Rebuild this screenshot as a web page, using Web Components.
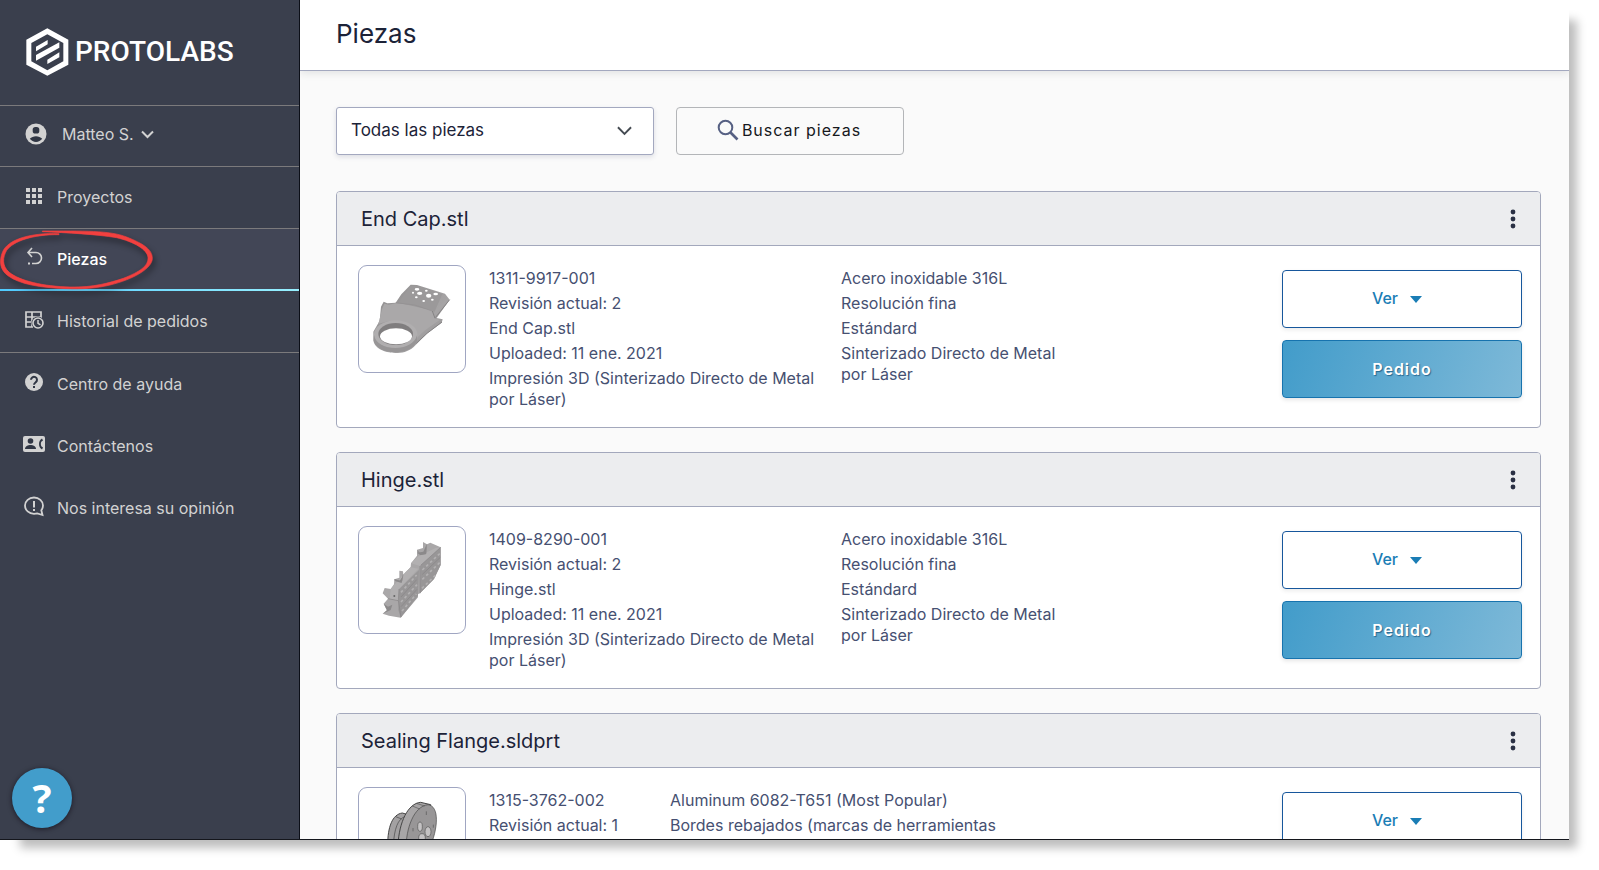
<!DOCTYPE html>
<html lang="es">
<head>
<meta charset="utf-8">
<title>Piezas - Protolabs</title>
<style>
  html, body { margin: 0; height: 100%; background: #fff; overflow: hidden; }
  body { font-family: Inter, "Liberation Sans", sans-serif; font-size: 16px; color: #1c2338; }
</style>
</head>
<body>
<pl-app>
  <pl-sidebar slot="sidebar">
    <pl-user name="Matteo S."></pl-user>
    <pl-nav-item icon="grid" line>Proyectos</pl-nav-item>
    <pl-nav-item icon="back" active>Piezas</pl-nav-item>
    <pl-nav-item icon="history" line>Historial de pedidos</pl-nav-item>
    <pl-nav-item icon="help">Centro de ayuda</pl-nav-item>
    <pl-nav-item icon="contact">Contáctenos</pl-nav-item>
    <pl-nav-item icon="opinion">Nos interesa su opinión</pl-nav-item>
  </pl-sidebar>
  <pl-header>Piezas</pl-header>
  <pl-toolbar></pl-toolbar>
  <part-card name="End Cap.stl" picture="endcap" orderable>
    <div slot="info">1311-9917-001</div>
    <div slot="info">Revisión actual: 2</div>
    <div slot="info">End Cap.stl</div>
    <div slot="info">Uploaded: 11 ene. 2021</div>
    <div slot="info">Impresión 3D (Sinterizado Directo de Metal por Láser)</div>
    <div slot="specs">Acero inoxidable 316L</div>
    <div slot="specs">Resolución fina</div>
    <div slot="specs">Estándard</div>
    <div slot="specs">Sinterizado Directo de Metal por Láser</div>
  </part-card>
  <part-card name="Hinge.stl" picture="hinge" orderable>
    <div slot="info">1409-8290-001</div>
    <div slot="info">Revisión actual: 2</div>
    <div slot="info">Hinge.stl</div>
    <div slot="info">Uploaded: 11 ene. 2021</div>
    <div slot="info">Impresión 3D (Sinterizado Directo de Metal por Láser)</div>
    <div slot="specs">Acero inoxidable 316L</div>
    <div slot="specs">Resolución fina</div>
    <div slot="specs">Estándard</div>
    <div slot="specs">Sinterizado Directo de Metal por Láser</div>
  </part-card>
  <part-card name="Sealing Flange.sldprt" picture="flange" wide-specs>
    <div slot="info">1315-3762-002</div>
    <div slot="info">Revisión actual: 1</div>
    <div slot="specs">Aluminum 6082-T651 (Most Popular)</div>
    <div slot="specs">Bordes rebajados (marcas de herramientas</div>
  </part-card>
</pl-app>

<script>
const ICONS = {
  grid: `<path fill="currentColor" d="M4 4h4v4H4zM10 4h4v4h-4zM16 4h4v4h-4zM4 10h4v4H4zM10 10h4v4h-4zM16 10h4v4h-4zM4 16h4v4H4zM10 16h4v4h-4zM16 16h4v4h-4z"/>`,
  back: `<path fill="none" stroke="currentColor" stroke-width="1.6" d="M10 3 6 7.500l4 4.500M6 7.500h8a5.500 5.500 0 0 1 0 11h-4"/><path fill="currentColor" d="M6 17.500h2v2H6z"/>`,
  history: `<path fill="none" stroke="currentColor" stroke-width="1.700" d="M11 19H4V4h15v6M4 9h15M4 14h7M10 4v15"/><circle cx="16" cy="15" r="6.500" fill="#3a3f4d"/><circle cx="16" cy="15" r="5" fill="none" stroke="currentColor" stroke-width="1.600"/><path fill="none" stroke="currentColor" stroke-width="1.500" d="M16 12v3.300l2.500 1.500"/>`,
  help: `<circle cx="12" cy="12" r="9" fill="currentColor"/><path fill="none" stroke="#303644" stroke-width="2" d="M9 9.800a3 2.900 0 1 1 4.800 2.300c-1.200.9-1.800 1.300-1.800 2.700"/><path fill="#303644" d="M11 16h2v2h-2z"/>`,
  contact: `<rect x="1" y="4" width="22" height="16" rx="2" fill="currentColor"/><g fill="#303644"><circle cx="8.500" cy="9" r="2.800"/><path d="M3 17c0-2.700 3-4 5.500-4s5.500 1.300 5.500 4z"/><path d="M20 6.500c-4 2-4 9 0 11l1-2-1.700-1.300c-.6-1.300-.6-3 0-4.400L21 8.500z"/></g>`,
  opinion: `<path fill="none" stroke="currentColor" stroke-width="1.800" d="M12 3.500c5 0 9 3.500 9 8 0 1.800-.7 3.400-1.700 4.800L20.500 21l-5.200-1.600c-1 .3-2.100.4-3.300.4-5 0-9-3.600-9-8.200s4-8.100 9-8.100z"/><path fill="currentColor" d="M11 7h2v6.500h-2zM11 15h2v2h-2z"/>`,
  user: `<circle cx="12" cy="12" r="10.500" fill="currentColor"/><rect x="8.700" y="5" width="6.600" height="6.600" rx="2.600" fill="#303644"/><path fill="#303644" d="M5.800 16.800c1.500-1.800 3.800-2.600 6.200-2.600s4.700.8 6.200 2.600c-1.500 2-3.700 3.200-6.200 3.200s-4.700-1.200-6.200-3.200z"/>`
};

const PICTURES = {
  endcap: `<svg viewBox="58 48 318 318" aria-hidden="true">
    <defs><linearGradient id="a" x1="0" y1="0" x2="1" y2="1"><stop offset="0" stop-color="#8d8b8c"/><stop offset=".6" stop-color="#a6a4a5"/><stop offset="1" stop-color="#8f8d8e"/></linearGradient></defs>
    <path fill="url(#a)" d="M185 133 213 104 232 105 316 131 330 149 291 204 309 208 306 218 263 250 222 291C205 306 186 309 168 309 132 309 101 293 101 268V245L120 212 124 170 132 155 143 160 168 158z"/>
    <path fill="#aaa8a9" d="M168 160 225 166 276 183 286 205 300 210C270 232 245 245 228 270 222 218 175 200 116 222L127 178 134 161 147 164z"/>
    <path fill="#9b999a" d="M213 107 232 108 308 132 284 187 276 181 176 158z"/>
    <path fill="none" stroke="#858384" stroke-width="3" d="M330 149 287 203M286 205 278 183 M307 216 262 250 230 280"/>
    <path fill="none" stroke="#929091" stroke-width="2" d="M278 183 225 165 168 158"/>
    <ellipse cx="168" cy="253" rx="65" ry="42" fill="#b0aeaf"/>
    <path fill="#979596" d="M103 256C110 306 220 308 232 256V272C215 318 116 318 102 272z"/>
    <ellipse cx="168" cy="252" rx="52" ry="33" fill="#807e7f"/>
    <ellipse cx="169" cy="259" rx="48" ry="24" fill="#fff"/>
    <g fill="#fff"><ellipse cx="232" cy="118" rx="7" ry="4"/><ellipse cx="260" cy="122" rx="4" ry="3"/><ellipse cx="288" cy="132" rx="7" ry="4"/><ellipse cx="240" cy="130" rx="8" ry="5"/><ellipse cx="267" cy="137" rx="8" ry="6"/><ellipse cx="230" cy="142" rx="4" ry="3"/><ellipse cx="252" cy="153" rx="4" ry="3"/><ellipse cx="278" cy="149" rx="4" ry="3"/><ellipse cx="220" cy="128" rx="3" ry="3"/></g>
  </svg>`,
  hinge: `<svg viewBox="58 51 318 318" aria-hidden="true">
    <path fill="#a9a7a8" d="M214 160 232 137V119L250 114V96L262 103 272 98 303 112V165L283 207 241 250 234 253 235 262 183 323 148 317 129 311 142 302 132 281 145 266 129 250 135 234 153 237 163 223 164 208 179 203 179 182 190 184 191 194 213 171z"/>
    <path fill="#989697" d="M243 166 303 112V165L283 207 241 250zM178 237 238 180 235 258 183 323 176 300z"/>
    <path fill="#b2b0b1" d="M214 160 236 139 288 114 303 112 241 168zM153 237 197 187 213 172 236 176 178 237 176 272 150 266z"/>
    <path fill="none" stroke="#b3b1b2" stroke-width="5" stroke-dasharray="8 8" d="M248 180 302 129M248 208 300 158M247 235 288 195M184 247 231 195M184 276 232 224M187 303 230 252"/>
    <path fill="none" stroke="#868485" stroke-width="2" d="M241 168V250M178 237 176 272 184 321M145 266 176 272M164 210 186 214 190 194M234 122 242 134 259 131 261 104M243 166 303 112M248 193 302 142M184 261 231 209M184 290 232 238"/>
    <path fill="#8b898a" d="M190 198 186 219 168 214 164 207 180 212zM259 107V132L242 135 232 128 251 125zM132 281 145 290 158 284 153 300 129 311 142 300z"/>
    <circle cx="164" cy="258" r="3" fill="#666"/>
  </svg>`,
  flange: `<svg viewBox="1078 148 318 318" aria-hidden="true">
    <path fill="#a3a1a2" stroke="#454545" stroke-width="3" d="M1164 320C1164 265 1178 227 1208 223L1228 229 1220 330z"/>
    <path fill="none" stroke="#454545" stroke-width="2" d="M1181 320C1184 270 1194 240 1218 233M1188 234 1206 241"/>
    <path fill="#a8a6a7" stroke="#454545" stroke-width="3" d="M1195 320C1198 250 1225 194 1263 191L1293 198 1290 330z"/>
    <path fill="#989697" stroke="#454545" stroke-width="2" d="M1219 330C1219 270 1242 203 1285 198 1320 202 1316 270 1289 330z"/>
    <path fill="none" stroke="#555" stroke-width="2" d="M1238 202 1260 211M1250 194 1275 202M1240 268V278M1301 258V267M1280 218V229"/>
    <g fill="#c4c2c3" stroke="#555" stroke-width="2"><ellipse cx="1261" cy="264" rx="7" ry="14"/><ellipse cx="1285" cy="279" rx="9" ry="15"/><ellipse cx="1267" cy="298" rx="10" ry="13"/></g>
  </svg>`
};

/* Base class: gives every element an open shadow root filled from html(). */
class Base extends HTMLElement {
  constructor() { super(); this.attachShadow({ mode: 'open' }); }
  connectedCallback() { this.shadowRoot.innerHTML = `<style>*{box-sizing:border-box}</style>` + this.html(); }
}

customElements.define('pl-icon', class extends Base {
  html() {
    return `<style>:host{display:block;flex:none;width:24px;height:24px}svg{display:block;width:100%;height:100%}</style>
      <svg viewBox="0 0 24 24" aria-hidden="true">${ICONS[this.getAttribute('name')]}</svg>`;
  }
});

customElements.define('pl-app', class extends Base {
  html() {
    return `<style>
      :host{display:grid;grid-template-columns:300px minmax(0,1fr);width:calc(100% - 30px);height:calc(100vh - 30px);position:relative;border-bottom:1px solid #14161c;box-sizing:border-box;background:#fafafa;box-shadow:14px 14px 9px -6px rgba(0,0,0,.26)}
      main{min-height:0;overflow:hidden}
      .help{position:absolute;left:12px;bottom:11px;width:60px;height:60px;border:0;border-radius:50%;padding:0;background:#429dcb;color:#fff;font:700 40px/60px "Open Sans",sans-serif;box-shadow:0 1px 5px rgba(15,10,20,.7)}
    </style>
    <slot name="sidebar"></slot>
    <main><slot></slot></main>
    <button class="help" type="button" title="Ayuda">?</button>`;
  }
});

customElements.define('pl-sidebar', class extends Base {
  html() {
    return `<style>
      :host{display:block;background:#3a3f4d;border-right:1px solid #0c0f18;color:#d2d2d2}
      .logo{display:flex;align-items:center;gap:6px;height:106px;padding:0 0 2px 25px;border-bottom:1px solid #7b7a7c;color:#fff;font:500 28px/34px Roboto,sans-serif;text-decoration:none;box-sizing:border-box}
      svg{display:block;width:44px;height:50px}
    </style>
    <a class="logo" href="#">
      <svg viewBox="75 81 132 150" aria-hidden="true"><path fill="#fff" fill-rule="evenodd" d="M142 85 205 119V194L142 227 79 194V119zM142 103 94 129V184L142 211 190 184V129z"/><path fill="#fff" d="M108 140 143 120V133L108 154zM108 165 178 127V143L108 182zM142 179 178 157V172L142 192z"/></svg>
      <span>PROTOLABS</span>
    </a>
    <nav><slot></slot></nav>`;
  }
});

customElements.define('pl-user', class extends Base {
  html() {
    return `<style>
      :host{display:block;border-bottom:1px solid #7b7a7c}
      button{display:flex;align-items:center;width:100%;height:60px;padding:0 0 4px 24px;border:0;background:none;color:inherit;font:inherit}
      span{margin-left:14px}
      svg{margin-left:7px;width:13px;height:9px}
    </style>
    <button type="button"><pl-icon name="user"></pl-icon><span>${this.getAttribute('name')}</span>
      <svg viewBox="0 0 13 9" aria-hidden="true"><path d="M1 1.500 6.500 7 12 1.500" fill="none" stroke="currentColor" stroke-width="2"/></svg></button>`;
  }
});

customElements.define('pl-nav-item', class extends Base {
  html() {
    const active = this.hasAttribute('active');
    return `<style>
      :host{display:block;position:relative}
      a{display:flex;align-items:center;gap:11px;height:62px;padding:0 0 1px 22px;color:inherit;text-decoration:none}
      pl-icon{margin-bottom:3px}
      :host([line]) a{border-bottom:1px solid #7b7a7c}
      :host([active]) a{background:#424656;border-bottom:2px solid;border-image:linear-gradient(90deg,#4fcaff,#98f0ff) 2}
      :host([active]) span{color:#fff;font-weight:500}
      .mark{position:absolute;left:0;top:1px;width:156px;height:62px;overflow:visible;filter:drop-shadow(2px 4px 3px rgba(0,0,0,.45));pointer-events:none}
    </style>
    <a href="#"><pl-icon name="${this.getAttribute('icon')}"></pl-icon><span><slot></slot></span></a>
    ${active ? `<svg class="mark" viewBox="0 147 468 186" aria-hidden="true"><path fill="#f2403f" stroke="#f2403f" stroke-width="2" d="M127 150C250 150 330 148 380 168 430 188 457 205 457 232 457 262 400 295 330 312 290 322 240 325 200 323 120 320 60 310 25 285 0 268-4 240 8 212 25 175 90 155 177 158V161C100 160 40 180 20 208 8 228 5 255 28 274 60 300 130 316 210 318 280 320 330 305 370 292 420 272 445 255 444 230 443 205 400 182 350 170 290 160 200 155 127 152z"/></svg>` : ''}`;
  }
});

customElements.define('pl-header', class extends Base {
  html() {
    return `<style>
      :host{display:flex;align-items:center;height:71px;padding:0 36px 3px;background:#fff;border-bottom:1px solid #a3a8bf;box-shadow:0 2px 8px rgba(40,50,60,.12);box-sizing:border-box}
      h1{margin:0;font-size:26px;line-height:32px;font-weight:400}
    </style><h1><slot></slot></h1>`;
  }
});

customElements.define('pl-toolbar', class extends Base {
  html() {
    return `<style>
      :host{display:flex;gap:22px;padding:36px 28px 36px 36px}
      .pick{display:grid;width:318px;align-items:center}
      .pick>*{grid-area:1/1}
      select{appearance:none;width:100%;height:48px;margin:0;padding:0 40px 2px 14px;border:1px solid #a3a8bf;border-radius:3px;background:#fff;color:#1c2338;font:17px/24px Inter,sans-serif;box-shadow:0 2px 5px rgba(40,50,90,.14)}
      .pick svg{justify-self:end;margin-right:22px;width:15px;height:10px;pointer-events:none}
      button{display:flex;align-items:center;justify-content:center;gap:3px;width:228px;height:48px;padding:0 2px 2px 0;border:1px solid #b3b5b8;border-radius:4px;background:#fafafa;color:#16181d;font:16px/24px Inter,sans-serif;letter-spacing:1px}
      button svg{width:22px;height:22px}
    </style>
    <div class="pick">
      <select aria-label="Filtro de piezas"><option>Todas las piezas</option></select>
      <svg viewBox="0 0 16 10" aria-hidden="true"><path d="M1 1 8 8 15 1" fill="none" stroke="#454b52" stroke-width="2"/></svg>
    </div>
    <button type="button"><svg viewBox="0 0 22 22" aria-hidden="true"><g fill="none" stroke="#566083"><circle cx="8.500" cy="8.500" r="6.800" stroke-width="2"/><path d="M13.500 13.500 20.500 20.500" stroke-width="2.600"/></g></svg>Buscar piezas</button>`;
  }
});

customElements.define('part-card', class extends Base {
  html() {
    const order = this.hasAttribute('orderable') ? `<button class="order" type="button">Pedido</button>` : '';
    return `<style>
      :host{display:block;margin:0 28px 24px 36px;border:1px solid #a3a8bc;border-radius:4px;background:#fff;overflow:hidden}
      header{display:flex;align-items:center;justify-content:space-between;height:54px;padding:0 15px 0 24px;background:#ecedef;border-bottom:1px solid #a3a8bc}
      h2{margin:0;font-size:20px;line-height:28px;font-weight:400}
      .menu{display:grid;place-items:center;width:24px;height:32px;padding:0;border:0;background:none}
      .menu svg{width:6px;height:22px}
      .body{display:flex;align-items:flex-start;min-height:181px;padding:19px 18px 0 21px}
      .thumb{flex:none;width:108px;height:108px;border:1px solid #a0a6c2;border-radius:9px;overflow:hidden}
      .thumb svg{display:block;width:100%;height:100%}
      .info,.specs{display:flex;flex-direction:column;gap:4px;padding-top:3px;color:#465071;line-height:21px}
      .info{width:336px;margin-left:23px}
      .specs{width:240px;margin-left:16px}
      :host([wide-specs]) .info{width:165px}
      :host([wide-specs]) .specs{width:350px}
      .actions{display:flex;flex-direction:column;gap:12px;width:240px;margin-left:auto;padding-top:5px}
      .actions button{display:flex;align-items:center;justify-content:center;height:58px;border-radius:4px;font:500 16px/24px Inter,sans-serif;padding:0 0 2px}
      .actions .view{gap:12px;padding-right:10px;border:1px solid #17579c;background:#fff;color:#1a7db5;box-shadow:0 2px 4px rgba(0,0,0,.08)}
      .view svg{width:12px;height:7px;margin-top:2px}
      .actions .order{border:1px solid #1773ae;background:linear-gradient(110deg,#429cca,#7eb9d8);color:#fff;font-weight:600;letter-spacing:1px;text-shadow:1px 1px 1px rgba(0,60,100,.6);box-shadow:0 2px 4px rgba(0,0,0,.1);padding:0}
    </style>
    <header><h2>${this.getAttribute('name')}</h2>
      <button class="menu" type="button" aria-label="Más opciones"><svg viewBox="0 0 6 22" aria-hidden="true"><g fill="#2a3044"><circle cx="3" cy="4" r="2.400"/><circle cx="3" cy="11" r="2.400"/><circle cx="3" cy="18" r="2.400"/></g></svg></button>
    </header>
    <div class="body">
      <div class="thumb">${PICTURES[this.getAttribute('picture')]}</div>
      <div class="info"><slot name="info"></slot></div>
      <div class="specs"><slot name="specs"></slot></div>
      <div class="actions">
        <button class="view" type="button">Ver<svg viewBox="0 0 12 7" aria-hidden="true"><path d="M0 0h12L6 7z" fill="#1a7db5"/></svg></button>
        ${order}
      </div>
    </div>`;
  }
});
</script>
</body>
</html>
